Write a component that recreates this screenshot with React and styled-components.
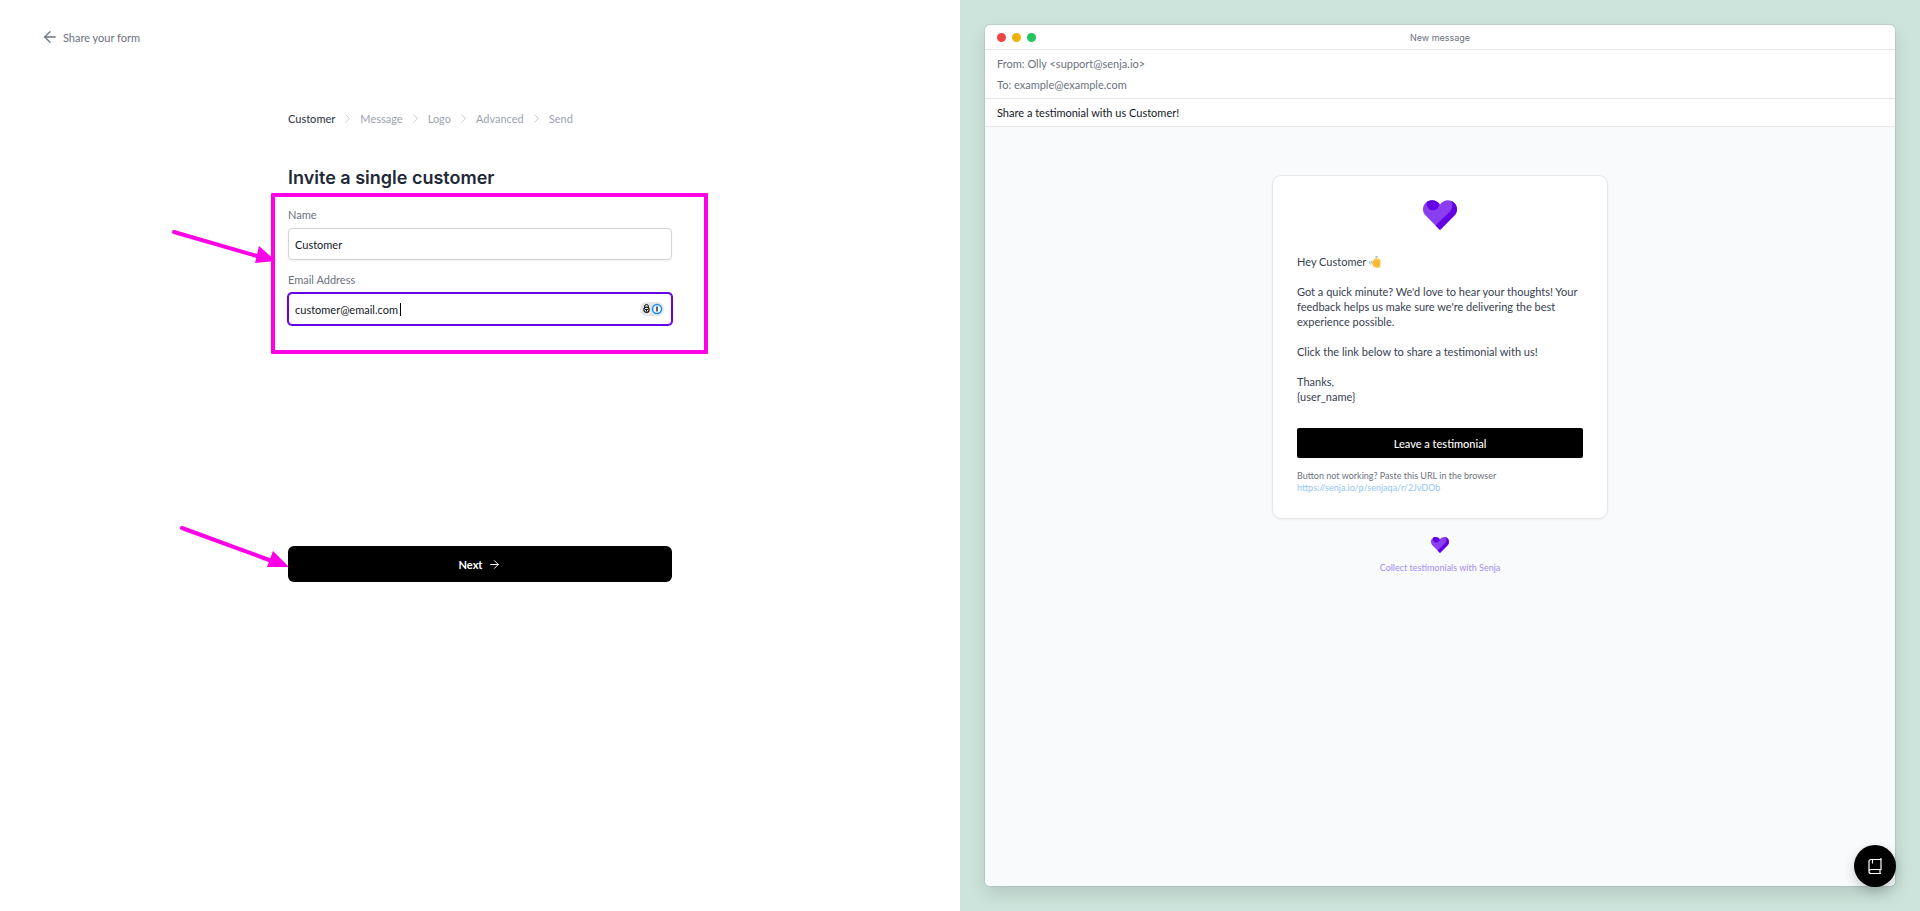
import React, { useId, useState } from "react";
import styled, { createGlobalStyle } from "styled-components";
import { ArrowLeft, ArrowRight, ChevronRight } from "lucide-react";

const steps = ["Customer", "Message", "Logo", "Advanced", "Send"];

function Heart({ size }) {
  const id = useId();
  return (
    <svg width={size} viewBox="0 0 34 30" aria-hidden="true">
      <clipPath id={id}>
        <path d="M17 30 2.6 15.6C.9 13.9 0 11.6 0 9.2 0 4.2 4 .2 9 .2c3.2 0 6.2 1.7 8 4.4C18.8 1.9 21.8.2 25 .2c5 0 9 4 9 9 0 2.4-.9 4.7-2.6 6.4Z" />
      </clipPath>
      <g clipPath={`url(#${id})`}>
        <rect width="34" height="30" fill="#8b3df2" />
        <circle cx="10" cy="4" r="6.3" fill="#6400e4" />
        <path d="M12.5 25.5 26.5 12c3-3 3.5-7 1.5-12h6v30H12.5Z" fill="#6400e4" />
      </g>
    </svg>
  );
}

function Wave() {
  return (
    <svg width="12" height="12" viewBox="0 0 24 24" aria-hidden="true">
      <path
        d="M7 11 14 3c1.5-1 3 .3 2.3 1.8L15 7.5l4-2.5c2-.8 3.3 1 2 2.5l1 .5c1.6.8 1.5 2 .8 3v9c0 2.5-3 3.5-6 3.5-5 0-9-2-10.5-6.5C5.7 14.5 5.5 12.5 7 11Z"
        fill="#fcbf3b"
      />
      <path d="m11 14 5-5m-3 8 6-6m-3 8 5-5" stroke="#ee9a2c" strokeWidth="1.5" fill="none" />
      <path d="M13 1.500c2-1 4-1 5 1M1 11c0 3 1 5 3 6m.5-7c-.5 2 0 3 1 4" stroke="#72a9d8" strokeWidth="2" fill="none" />
    </svg>
  );
}

function App() {
  const [name, setName] = useState("Customer");
  const [email, setEmail] = useState("customer@email.com");

  return (
    <Page>
      <GlobalStyle />
      <Editor>
        <BackLink href="#share">
          <ArrowLeft size={18} strokeWidth={1.7} />
          Share your form
        </BackLink>

        <Form onSubmit={(e) => e.preventDefault()}>
          <Breadcrumb aria-label="Steps">
            {steps.map((step, i) => (
              <React.Fragment key={step}>
                {i > 0 && <ChevronRight size={15} strokeWidth={1.5} />}
                <Step href={`#${step}`} $active={i === 0}>
                  {step}
                </Step>
              </React.Fragment>
            ))}
          </Breadcrumb>

          <StepBody>
            <Title>Invite a single customer</Title>
            <Fields>
              <Highlight />
              <FieldArrow width="106" height="40" viewBox="0 0 106 40" aria-hidden="true">
                <path d="M3 4 86 28" />
                <polygon points="88,18 105,33 84,35" />
              </FieldArrow>
              <Field>
                <Label htmlFor="name">Name</Label>
                <Input id="name" value={name} onChange={(e) => setName(e.target.value)} />
              </Field>
              <Field>
                <Label htmlFor="email">Email Address</Label>
                <InputWrap>
                  <Input
                    id="email"
                    type="email"
                    $focused
                    value={email}
                    onChange={(e) => setEmail(e.target.value)}
                  />
                  <Caret />
                  <PasswordBadge type="button" aria-label="Fill from password manager">
                    <svg width="22" height="14" viewBox="0 0 22 14">
                      <path d="M3.5 6V4.5a2 2 0 0 1 4 0V6" fill="none" stroke="#111" strokeWidth="1" />
                      <circle cx="5.5" cy="7.8" r="2.6" fill="#fff" stroke="#111" strokeWidth="1.2" />
                      <path d="M4 7.5h3M5.5 7v2.5" stroke="#111" strokeWidth="1" />
                      <circle cx="16" cy="7" r="4.5" fill="#fff" stroke="#1a8cff" strokeWidth="1.5" />
                      <path d="M16 4.5v5" stroke="#16324f" strokeWidth="1.5" />
                    </svg>
                  </PasswordBadge>
                </InputWrap>
              </Field>
            </Fields>
          </StepBody>

          <NextRow>
            <NextArrow width="110" height="50" viewBox="0 0 110 50" aria-hidden="true">
              <path d="M3 5 90 37" />
              <polygon points="94,28 110,44 88,44" />
            </NextArrow>
            <NextButton type="submit">
              Next
              <ArrowRight size={13} strokeWidth={1.8} />
            </NextButton>
          </NextRow>
        </Form>
      </Editor>

      <Preview>
        <MailWindow>
          <TitleBar>
            <Dots>
              <Dot $color="#ef4444" />
              <Dot $color="#eab308" />
              <Dot $color="#22c55e" />
            </Dots>
            <WindowTitle>New message</WindowTitle>
          </TitleBar>
          <Addresses>
            <p>From: Olly &lt;support@senja.io&gt;</p>
            <p>To: example@example.com</p>
          </Addresses>
          <Subject>Share a testimonial with us Customer!</Subject>
          <MailBody>
            <Card>
              <Logo>
                <Heart size={34} />
              </Logo>
              <Message>
                <p>
                  Hey Customer <Wave />
                </p>
                <p>
                  Got a quick minute? We'd love to hear your thoughts! Your feedback helps us make
                  sure we're delivering the best experience possible.
                </p>
                <p>Click the link below to share a testimonial with us!</p>
                <p>
                  Thanks,
                  <br />
                  {"{user_name}"}
                </p>
              </Message>
              <TestimonialButton type="button">Leave a testimonial</TestimonialButton>
              <Fallback>
                Button not working? Paste this URL in the browser
                <a href="#testimonial">https://senja.io/p/senjaqa/r/2JvDOb</a>
              </Fallback>
            </Card>
            <Collect href="#senja">
              <Heart size={18} />
              Collect testimonials with Senja
            </Collect>
          </MailBody>
        </MailWindow>
      </Preview>

      <HelpButton type="button" aria-label="Help">
        <svg width="16" height="18" viewBox="0 0 16 18" fill="none" stroke="#fff" strokeWidth="1.2">
          <path d="M14 12.5V2.5H4a2 2 0 0 0-2 2v10a2 2 0 0 1 2-2h10ZM2 14.5a2 2 0 0 0 2 2h10M13 12.5v4M5.5 2.5v4M14 2.5V1" />
        </svg>
      </HelpButton>
    </Page>
  );
}

export default App;

const GlobalStyle = createGlobalStyle`
  * {
    box-sizing: border-box;
  }

  body {
    margin: 0;
    font-family: Lato, sans-serif;
    font-size: 11px;
    line-height: 15px;
    color: #374151;
    background: #fff;
  }

  p, h1 {
    margin: 0;
  }

  a {
    color: inherit;
    text-decoration: none;
  }

  button, input {
    font: inherit;
  }

  button {
    border: none;
    cursor: pointer;
  }
`;

const Page = styled.main`
  display: grid;
  grid-template-columns: 1fr 1fr;
  min-height: 100vh;
`;

const Editor = styled.section`
  display: flex;
  flex-direction: column;
  padding: 28px 41px;
`;

const BackLink = styled.a`
  display: flex;
  align-items: center;
  align-self: flex-start;
  gap: 4px;
  color: #6b7280;
`;

const Form = styled.form`
  width: 100%;
  max-width: 384px;
  margin: 65px auto 0;
`;

const Breadcrumb = styled.nav`
  display: flex;
  align-items: center;
  gap: 5px;
  color: #c3c7ce;
`;

const Step = styled.a`
  font-weight: ${(props) => (props.$active ? 500 : 400)};
  color: ${(props) => (props.$active ? "#374151" : "#9ca3af")};
`;

const StepBody = styled.div`
  min-height: 382px;
  margin-top: 38px;
`;

const Title = styled.h1`
  font-family: Inter, sans-serif;
  font-size: 18px;
  line-height: 27px;
  font-weight: 600;
  color: #1f2937;
`;

const Fields = styled.div`
  position: relative;
  display: flex;
  flex-direction: column;
  gap: 12px;
  margin-top: 16px;
`;

const Field = styled.div`
  display: flex;
  flex-direction: column;
  gap: 6px;
`;

const Label = styled.label`
  color: #6b7280;
`;

const InputWrap = styled.div`
  position: relative;
`;

const Input = styled.input`
  display: block;
  width: 100%;
  height: 32px;
  padding: 0 6px;
  border: 1px solid ${(props) => (props.$focused ? "#6701e6" : "#d1d5db")};
  border-radius: 4px;
  outline: none;
  color: #111827;
  background: #fff;
  box-shadow: ${(props) => (props.$focused ? "0 0 0 1px #6701e6" : "0 1px 2px rgba(0, 0, 0, 0.05)")};
`;

const Caret = styled.span`
  position: absolute;
  top: 10px;
  left: 112px;
  width: 1px;
  height: 13px;
  background: #000;
`;

const PasswordBadge = styled.button`
  position: absolute;
  top: 9px;
  right: 8px;
  height: 14px;
  padding: 0 1px;
  border-radius: 7px;
  background: #e5e5e5;

  svg {
    display: block;
  }
`;

const Highlight = styled.div`
  position: absolute;
  inset: -14px -36px -29px -17px;
  border: 4px solid #ff00e6;
  border-radius: 1px;
  pointer-events: none;
`;

const Arrow = styled.svg`
  position: absolute;
  pointer-events: none;

  path {
    stroke: #ff00e6;
    stroke-width: 4;
    stroke-linecap: round;
  }

  polygon {
    fill: #ff00e6;
  }
`;

const FieldArrow = styled(Arrow)`
  top: 21px;
  left: -117px;
`;

const NextRow = styled.div`
  position: relative;
`;

const NextArrow = styled(Arrow)`
  top: -23px;
  left: -109px;
`;

const NextButton = styled.button`
  display: flex;
  align-items: center;
  justify-content: center;
  gap: 6px;
  width: 100%;
  height: 36px;
  border-radius: 6px;
  font-weight: 700;
  color: #fff;
  background: #000;
`;

const Preview = styled.section`
  display: flex;
  padding: 25px;
  background: #cce4db;
`;

const MailWindow = styled.div`
  display: flex;
  flex-direction: column;
  flex: 1;
  border-radius: 5px;
  overflow: hidden;
  background: #fff;
  box-shadow: 0 0 0 1px rgba(120, 110, 140, 0.15), 0 8px 18px rgba(0, 0, 0, 0.12);
`;

const TitleBar = styled.div`
  display: grid;
  grid-template-columns: 1fr auto 1fr;
  align-items: center;
  height: 25px;
  padding: 0 12px;
  border-bottom: 1px solid #e5e7eb;
`;

const Dots = styled.div`
  display: flex;
  gap: 6px;
`;

const Dot = styled.span`
  width: 9px;
  height: 9px;
  border-radius: 50%;
  background: ${(props) => props.$color};
`;

const WindowTitle = styled.span`
  font-family: Inter, sans-serif;
  font-size: 9px;
  color: #6b7280;
`;

const Addresses = styled.div`
  display: flex;
  flex-direction: column;
  gap: 6px;
  padding: 6px 12px;
  border-bottom: 1px solid #e5e7eb;
  color: #6b7280;
`;

const Subject = styled.div`
  padding: 6px 12px;
  border-bottom: 1px solid #e5e7eb;
  color: #111827;
`;

const MailBody = styled.div`
  display: flex;
  flex-direction: column;
  align-items: center;
  flex: 1;
  padding: 48px 24px;
  background: #f9fafc;
`;

const Card = styled.article`
  width: 100%;
  max-width: 336px;
  padding: 24px;
  border: 1px solid #e5e7eb;
  border-radius: 9px;
  background: #fff;
  box-shadow: 0 1px 2px rgba(0, 0, 0, 0.05);
`;

const Logo = styled.div`
  display: flex;
  justify-content: center;
`;

const Message = styled.div`
  display: flex;
  flex-direction: column;
  gap: 15px;
  margin: 24px 0;

  svg {
    vertical-align: -2px;
  }
`;

const TestimonialButton = styled.button`
  width: 100%;
  height: 30px;
  border-radius: 2px;
  font-weight: 500;
  color: #fff;
  background: #000;
`;

const Fallback = styled.p`
  margin-top: 12px;
  font-size: 9px;
  line-height: 12px;
  color: #6b7280;

  a {
    display: block;
    color: #93c5fd;
  }
`;

const Collect = styled.a`
  display: flex;
  flex-direction: column;
  align-items: center;
  gap: 9px;
  margin-top: 18px;
  font-size: 9px;
  line-height: 12px;
  color: #a78bfa;
`;

const HelpButton = styled.button`
  position: fixed;
  right: 24px;
  bottom: 24px;
  display: flex;
  align-items: center;
  justify-content: center;
  width: 42px;
  height: 42px;
  padding: 0;
  border-radius: 50%;
  background: #000;
  box-shadow: 0 4px 12px rgba(0, 0, 0, 0.2);
`;
